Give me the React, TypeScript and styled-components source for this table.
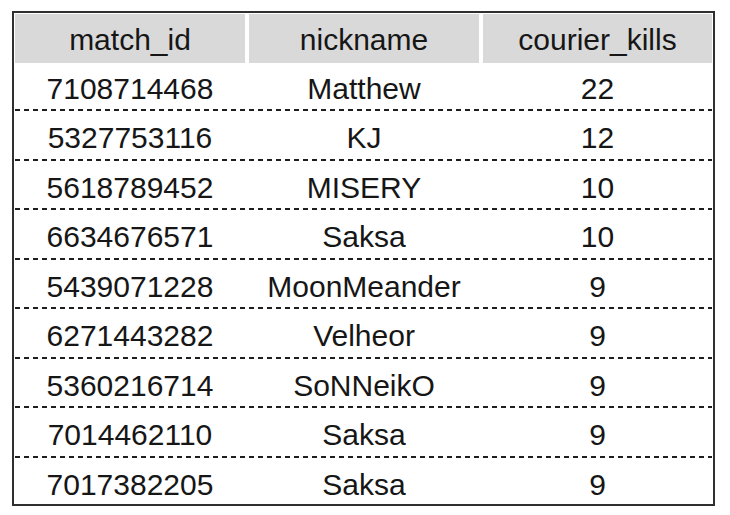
import React from 'react';
import styled, { createGlobalStyle } from 'styled-components';

type Row = {
	matchId: string;
	nickname: string;
	courierKills: number;
}

const rows: Row[] = [
	{ matchId: '7108714468', nickname: 'Matthew', courierKills: 22 },
	{ matchId: '5327753116', nickname: 'KJ', courierKills: 12 },
	{ matchId: '5618789452', nickname: 'MISERY', courierKills: 10 },
	{ matchId: '6634676571', nickname: 'Saksa', courierKills: 10 },
	{ matchId: '5439071228', nickname: 'MoonMeander', courierKills: 9 },
	{ matchId: '6271443282', nickname: 'Velheor', courierKills: 9 },
	{ matchId: '5360216714', nickname: 'SoNNeikO', courierKills: 9 },
	{ matchId: '7014462110', nickname: 'Saksa', courierKills: 9 },
	{ matchId: '7017382205', nickname: 'Saksa', courierKills: 9 },
];

const columns = ['match_id', 'nickname', 'courier_kills'];

export default function App(): JSX.Element {
	return (
		<>
			<GlobalStyle />
			<Frame>
				<HeaderRow>
					{columns.map(c => <HeaderCell key={c}>{c}</HeaderCell>)}
				</HeaderRow>
				<Body>
					{rows.map((r, i) => (
						<BodyRow key={r.matchId} last={i === rows.length - 1}>
							<Cell>{r.matchId}</Cell>
							<Cell>{r.nickname}</Cell>
							<Cell>{r.courierKills}</Cell>
						</BodyRow>
					))}
				</Body>
			</Frame>
		</>
	);
}

const GlobalStyle = createGlobalStyle`
	body {
		margin: 0;
		background: #fff;
		font-family: "Liberation Sans", Arial, sans-serif;
		color: #161616;
	}
`;

const Frame = styled.div`
	margin: 11px 0 0 12px;
	border: 2px solid #303030;
	padding: 1px 1px 0 1px;
	width: 697px;
`;

const HeaderRow = styled.div`
	display: grid;
	grid-template-columns: 230px 230px 229px;
	column-gap: 4px;
	height: 46px;
`;

const HeaderCell = styled.div`
	background: #d9d9d9;
	font-size: 30px;
	line-height: 46px;
	padding-top: 2.5px;
	box-sizing: border-box;
	text-align: center;
`;

const Body = styled.div`
	padding-top: 1.5px;
`;

// dashed separator drawn as a repeating gradient so the dash length matches
const BodyRow = styled.div<{ last: boolean }>`
	display: grid;
	grid-template-columns: 230px 230px 229px;
	column-gap: 4px;
	height: ${p => p.last ? '46px' : '49.5px'};
	background-image: ${p => p.last
		? 'none'
		: 'repeating-linear-gradient(to right, #1e1e1e 0 5px, transparent 5px 9px)'};
	background-size: 100% 2px;
	background-position: bottom left;
	background-repeat: no-repeat;
`;

const Cell = styled.div`
	font-size: 30px;
	line-height: 46px;
	padding-top: 4px;
	box-sizing: border-box;
	text-align: center;
`;
